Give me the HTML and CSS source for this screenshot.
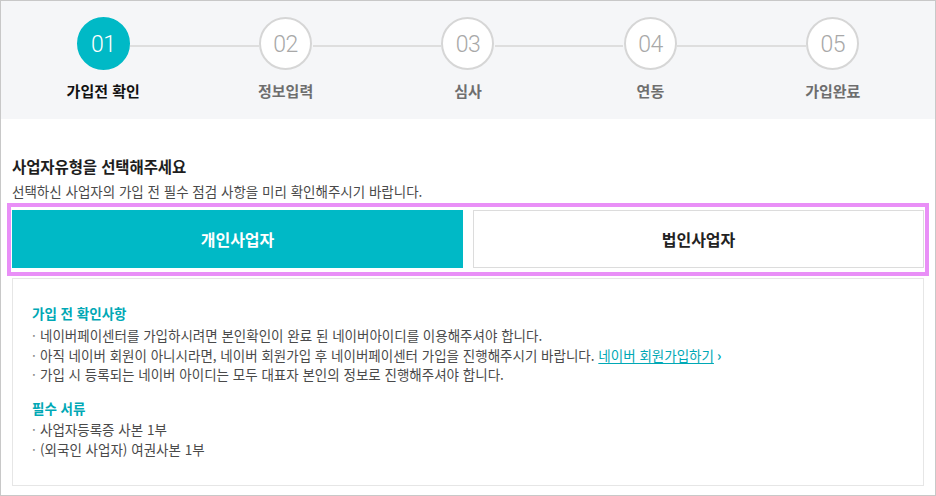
FILE: index.html
```html
<!DOCTYPE html>
<html lang="ko">
<head>
<meta charset="utf-8">
<title>가입전 확인</title>
<link rel="stylesheet" href="styles.css">
</head>
<body>
<div class="frame">
  <div class="band">
    <ol class="steps">
      <li class="step active"><span class="num">01</span><span class="label">가입전 확인</span></li>
      <li class="step"><span class="num">02</span><span class="label">정보입력</span></li>
      <li class="step"><span class="num">03</span><span class="label">심사</span></li>
      <li class="step"><span class="num">04</span><span class="label">연동</span></li>
      <li class="step"><span class="num">05</span><span class="label">가입완료</span></li>
    </ol>
  </div>
  <div class="content">
    <h2 class="title">사업자유형을 선택해주세요</h2>
    <p class="desc">선택하신 사업자의 가입 전 필수 점검 사항을 미리 확인해주시기 바랍니다.</p>
    <div class="highlight">
      <div class="types">
        <button class="type selected">개인사업자</button>
        <button class="type">법인사업자</button>
      </div>
    </div>
    <div class="info">
      <h3 class="info-title">가입 전 확인사항</h3>
      <ul class="list">
        <li>네이버페이센터를 가입하시려면 본인확인이 완료 된 네이버아이디를 이용해주셔야 합니다.</li>
        <li>아직 네이버 회원이 아니시라면, 네이버 회원가입 후 네이버페이센터 가입을 진행해주시기 바랍니다. <a class="link" href="#">네이버 회원가입하기</a><span class="chev">›</span></li>
        <li>가입 시 등록되는 네이버 아이디는 모두 대표자 본인의 정보로 진행해주셔야 합니다.</li>
      </ul>
      <h3 class="info-title second">필수 서류</h3>
      <ul class="list">
        <li>사업자등록증 사본 1부</li>
        <li>(외국인 사업자) 여권사본 1부</li>
      </ul>
    </div>
  </div>
</div>
</body>
</html>
```

FILE: styles.css
```css
* { box-sizing: border-box; }
html, body { margin: 0; padding: 0; }
body {
  font-family: "Noto Sans CJK KR", "Noto Sans", sans-serif;
  color: #222;
  background: #fff;
}
.frame {
  width: 936px;
  height: 496px;
  border: 1px solid #c8c8c8;
  overflow: hidden;
}
.band {
  background: #f5f6f8;
  padding: 16px 11px 17px;
}
.steps {
  list-style: none;
  margin: 0;
  padding: 0;
  display: grid;
  grid-template-columns: repeat(5, 1fr);
}
.step {
  position: relative;
  display: flex;
  flex-direction: column;
  align-items: center;
}
.step + .step::before {
  content: "";
  position: absolute;
  top: 28px;
  left: calc(-50% + 27px);
  right: calc(50% + 27px);
  height: 2px;
  background: #dedede;
}
.num {
  width: 53px;
  height: 53px;
  border-radius: 50%;
  border: 2px solid #d6d6d6;
  background: #fff;
  color: #a8a8a8;
  display: flex;
  align-items: center;
  justify-content: center;
  font-family: "Roboto", sans-serif;
  font-weight: 300;
  font-size: 23px;
  letter-spacing: -0.5px;
  padding-top: 1px;
}
.step.active .num {
  background: #00b9c6;
  border-color: #00b9c6;
  color: #fff;
}
.label {
  margin-top: 10px;
  font-size: 15px;
  line-height: 22px;
  font-weight: 700;
  color: #6e6e6e;
}
.step.active .label { color: #111; }

.content {
  padding: 0 11px;
}
.title {
  margin: 36px 0 0;
  font-size: 15.5px;
  line-height: 22px;
  font-weight: 700;
  color: #1e1e1e;
  letter-spacing: -0.1px;
}
.desc {
  margin: 4px 0 0;
  font-size: 13.5px;
  line-height: 20px;
  color: #4a4a4a;
}
.highlight {
  margin: 2px -5px 0;
  border: 4px solid #e98ff7;
  padding: 3px 1px 4px;
}
.types {
  display: grid;
  grid-template-columns: 1fr 1fr;
  gap: 10px;
}
.type {
  height: 58px;
  border: 1px solid #dcdcdc;
  background: #fff;
  font-family: inherit;
  font-size: 16px;
  font-weight: 700;
  color: #222;
  padding: 0;
}
.type.selected {
  background: #00b9c6;
  border-color: #00b9c6;
  color: #fff;
}
.info {
  margin-top: 2px;
  height: 208px;
  border: 1px solid #e6e6e6;
  padding: 25px 19px 0;
}
.info-title {
  margin: 0;
  font-size: 13.5px;
  line-height: 19.5px;
  font-weight: 700;
  color: #00a8b5;
}
.info-title.second { margin-top: 14.5px; }
.list {
  list-style: none;
  margin: 2.5px 0 0;
  padding: 0;
}
.info-title.second + .list { margin-top: 1.5px; }
.list li {
  font-size: 13.5px;
  line-height: 19.5px;
  color: #4a4a4a;
}
.list li::before {
  content: "·";
  display: inline-block;
  width: 8px;
  color: #888;
}
.link {
  color: #00a8b5;
  text-decoration: underline;
  text-underline-offset: 2px;
}
.chev {
  color: #00a8b5;
  font-weight: 700;
  margin-left: 3px;
}
```
